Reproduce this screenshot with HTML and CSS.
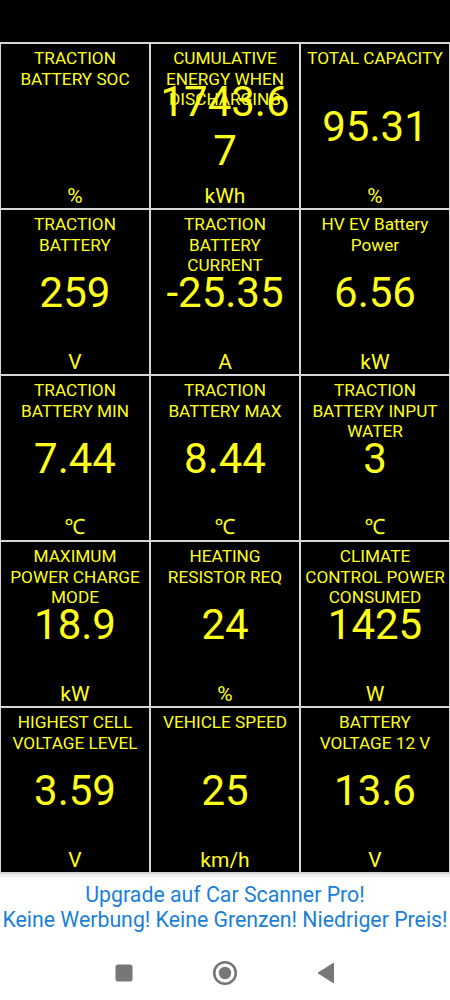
FILE: index.html
```html
<!DOCTYPE html>
<html lang="de">
  <head>
    <meta charset="UTF-8">
    <meta name="viewport" content="width=device-width, initial-scale=1.0">
    <title>Car Scanner</title>
    <link rel="stylesheet" href="styles.css">
  </head>
  <body>
    <div class="topbar"></div>
    <div class="dash">
      <div class="cell">
        <div class="label">TRACTION BATTERY SOC</div>
        <div class="value"></div>
        <div class="unit">%</div>
      </div>
      <div class="cell">
        <div class="label">CUMULATIVE ENERGY WHEN DISCHARGING</div>
        <div class="value">1743.67</div>
        <div class="unit">kWh</div>
      </div>
      <div class="cell">
        <div class="label">TOTAL CAPACITY</div>
        <div class="value">95.31</div>
        <div class="unit">%</div>
      </div>

      <div class="cell">
        <div class="label">TRACTION BATTERY</div>
        <div class="value">259</div>
        <div class="unit">V</div>
      </div>
      <div class="cell">
        <div class="label">TRACTION BATTERY CURRENT</div>
        <div class="value">-25.35</div>
        <div class="unit">A</div>
      </div>
      <div class="cell">
        <div class="label">HV EV Battery Power</div>
        <div class="value">6.56</div>
        <div class="unit">kW</div>
      </div>

      <div class="cell">
        <div class="label">TRACTION BATTERY MIN</div>
        <div class="value">7.44</div>
        <div class="unit">℃</div>
      </div>
      <div class="cell">
        <div class="label">TRACTION BATTERY MAX</div>
        <div class="value">8.44</div>
        <div class="unit">℃</div>
      </div>
      <div class="cell">
        <div class="label">TRACTION BATTERY INPUT WATER</div>
        <div class="value">3</div>
        <div class="unit">℃</div>
      </div>

      <div class="cell">
        <div class="label">MAXIMUM POWER CHARGE MODE</div>
        <div class="value">18.9</div>
        <div class="unit">kW</div>
      </div>
      <div class="cell">
        <div class="label">HEATING RESISTOR REQ</div>
        <div class="value">24</div>
        <div class="unit">%</div>
      </div>
      <div class="cell">
        <div class="label">CLIMATE CONTROL POWER CONSUMED</div>
        <div class="value">1425</div>
        <div class="unit">W</div>
      </div>

      <div class="cell">
        <div class="label">HIGHEST CELL VOLTAGE LEVEL</div>
        <div class="value">3.59</div>
        <div class="unit">V</div>
      </div>
      <div class="cell">
        <div class="label">VEHICLE SPEED</div>
        <div class="value">25</div>
        <div class="unit">km/h</div>
      </div>
      <div class="cell">
        <div class="label">BATTERY VOLTAGE 12 V</div>
        <div class="value">13.6</div>
        <div class="unit">V</div>
      </div>
    </div>

    <div class="promo">
      <div>Upgrade auf Car Scanner Pro!</div>
      <div>Keine Werbung! Keine Grenzen! Niedriger Preis!</div>
    </div>

    <div class="navbar">
      <span class="nav-btn">
        <svg width="18" height="18" viewBox="0 0 18 18"><rect x="0.5" y="0.5" width="17" height="17" rx="2.5" fill="#777"/></svg>
      </span>
      <span class="nav-btn">
        <svg width="26" height="26" viewBox="0 0 26 26"><circle cx="13" cy="13" r="10.8" fill="none" stroke="#777" stroke-width="2.6"/><circle cx="13" cy="13" r="6.2" fill="#777"/></svg>
      </span>
      <span class="nav-btn">
        <svg width="18" height="22" viewBox="0 0 18 22"><path d="M16.5 1.2 L1 11 L16.5 20.8 Z" fill="#777" stroke="#777" stroke-width="1" stroke-linejoin="round"/></svg>
      </span>
    </div>
  </body>
</html>
```

FILE: styles.css
```css
* { box-sizing: border-box; }
body {
  margin: 0;
  background: #fff;
  font-family: Roboto, "Noto Sans", sans-serif;
}
.topbar {
  height: 42px;
  background: #000;
}
.dash {
  display: grid;
  grid-template-columns: repeat(3, 1fr);
  grid-auto-rows: 164px;
  gap: 2px;
  padding: 2px 1px;
  background: #d6d6d6;
}
.cell {
  display: grid;
  grid-template-columns: 100%;
  grid-template-rows: 100%;
  background: #000;
  color: #ffff1a;
  text-align: center;
  overflow: hidden;
}
.cell > div { grid-area: 1 / 1; }
.label {
  align-self: start;
  padding: 4px 2px 0;
  font-size: 17.2px;
  line-height: 20.5px;
}
.value {
  align-self: center;
  font-size: 42px;
  word-break: break-all;
}
.unit {
  align-self: end;
  font-size: 21px;
}
.promo {
  padding: 5px 0 12px;
  border-top: 3px solid #eee;
  color: #1a7fd8;
  font-size: 21.3px;
  line-height: 25px;
  text-align: center;
  white-space: nowrap;
}
.navbar {
  display: flex;
  justify-content: center;
  align-items: center;
  gap: 61px;
  height: 58px;
}
.nav-btn {
  display: flex;
  justify-content: center;
  width: 40px;
}
```
